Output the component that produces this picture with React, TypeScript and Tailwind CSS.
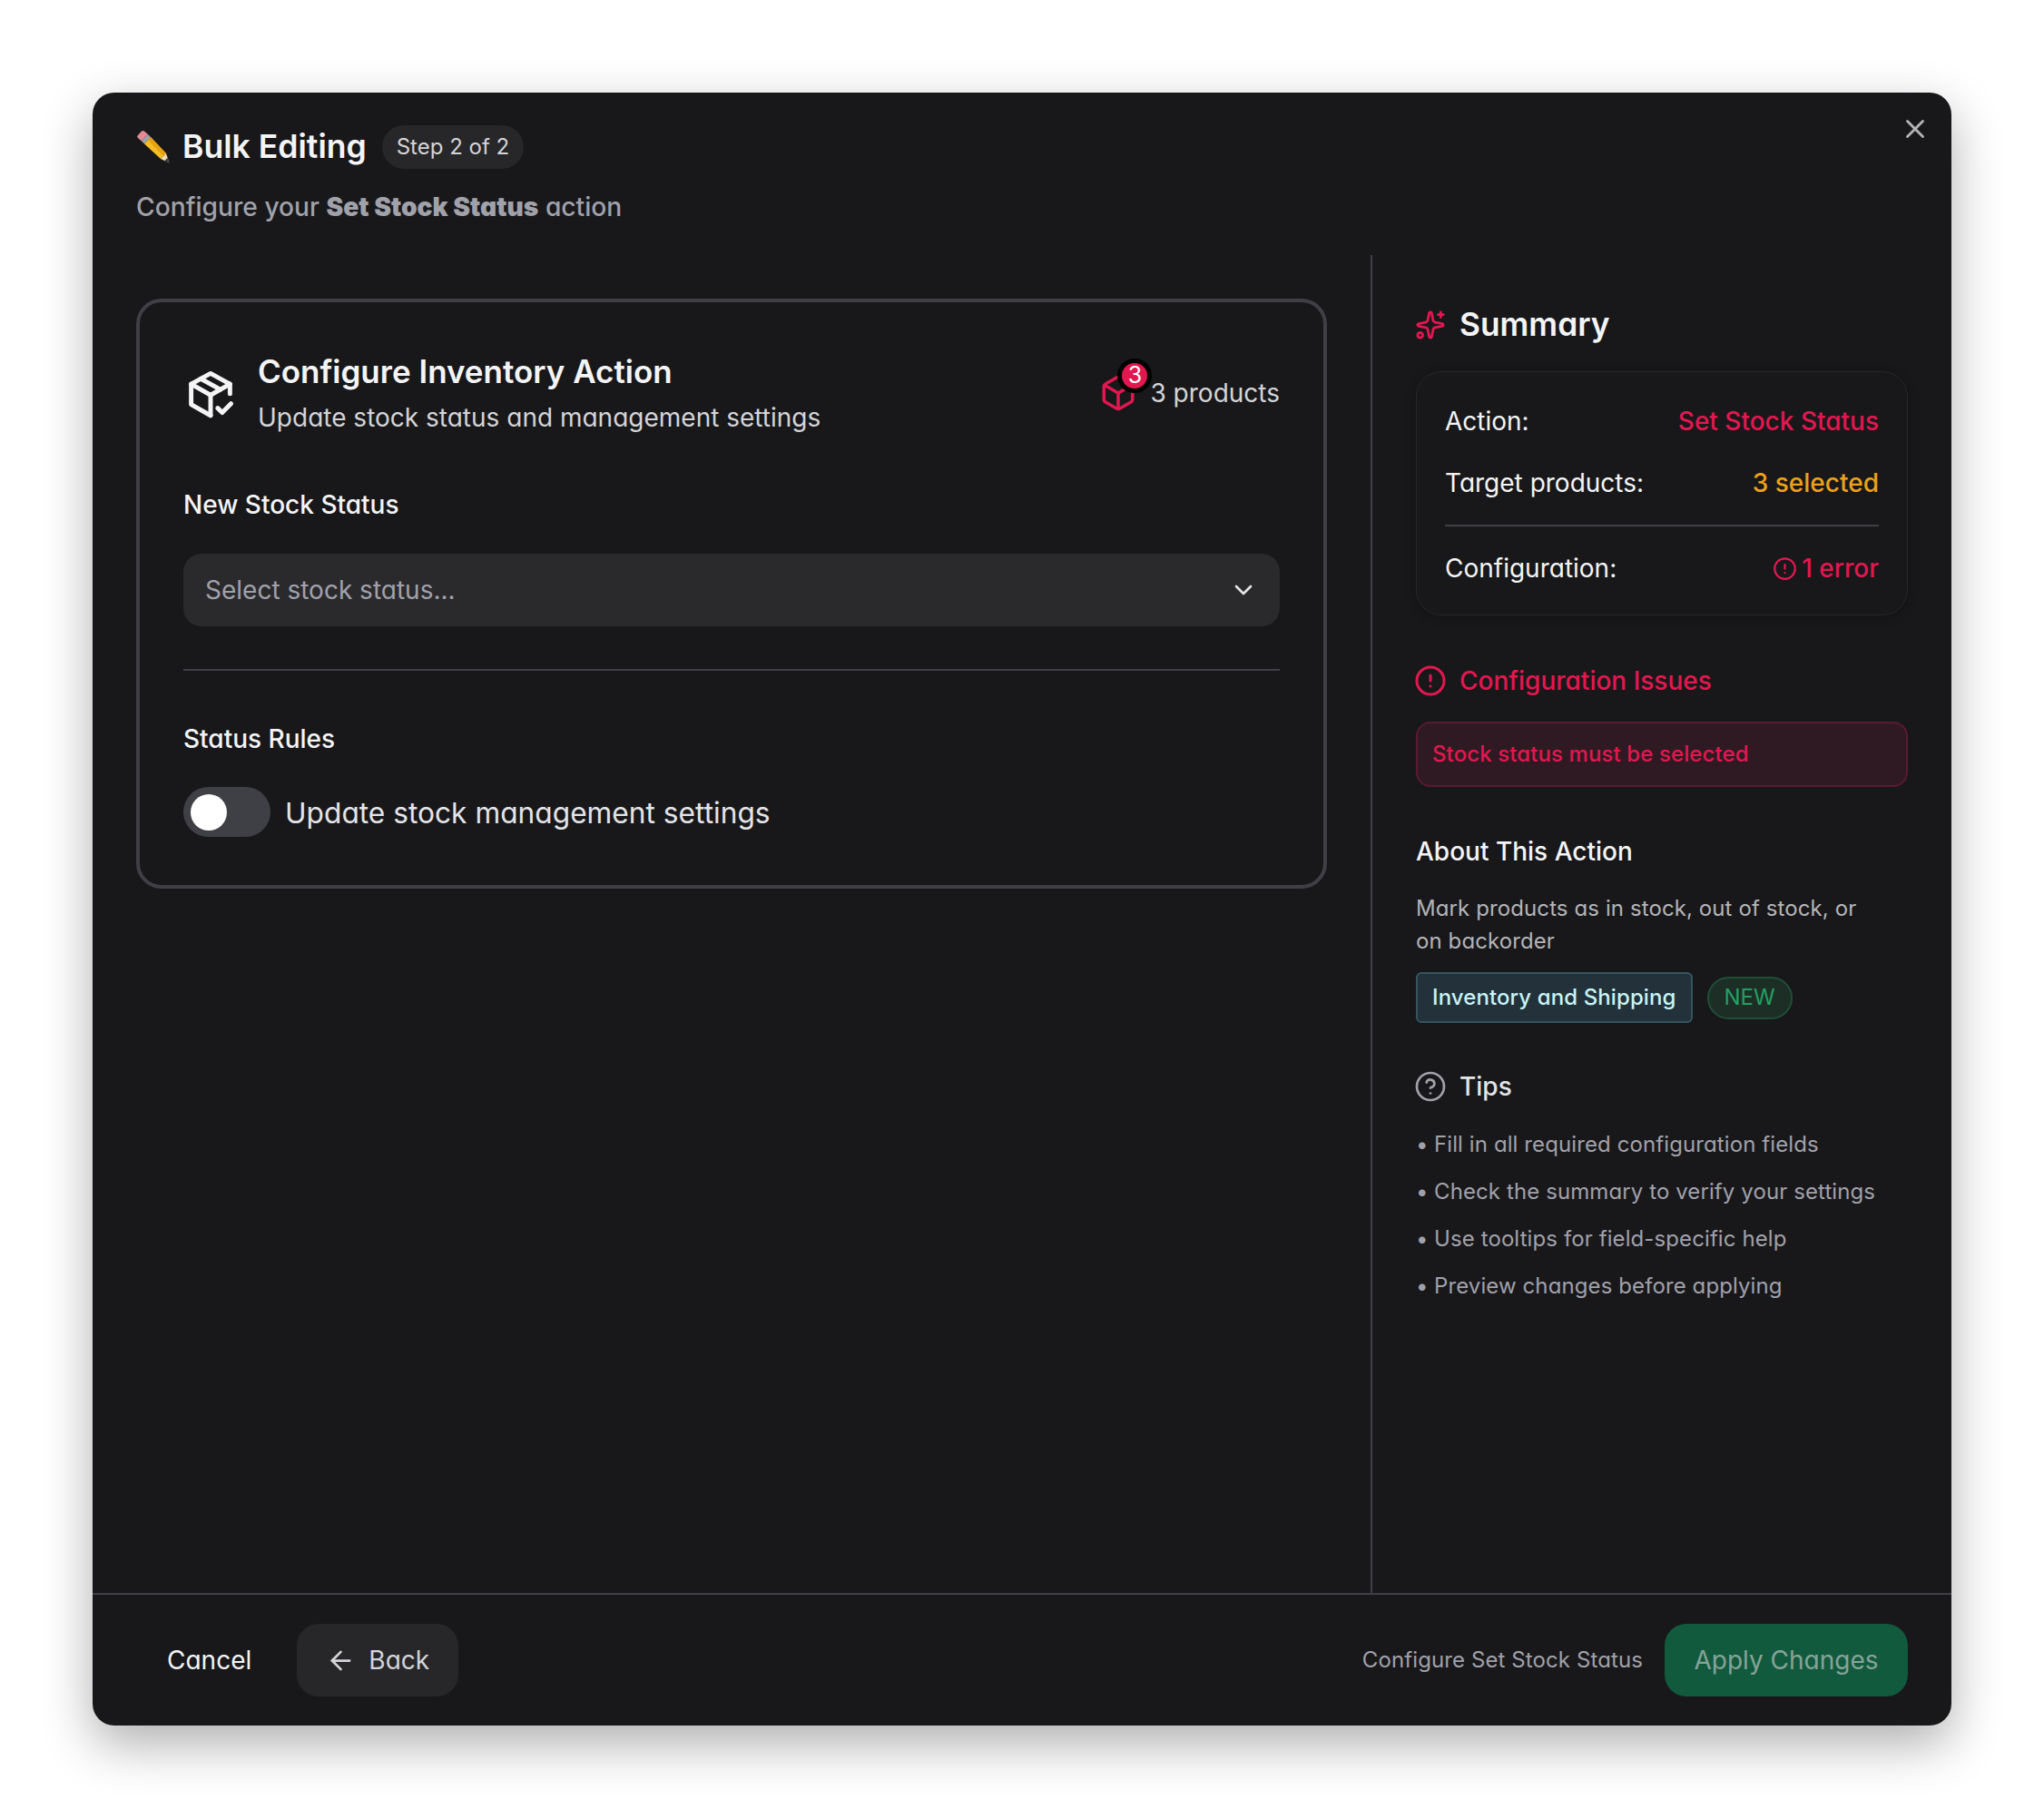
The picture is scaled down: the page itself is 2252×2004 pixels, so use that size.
import React from "react";
import { X, ChevronDown, Sparkles, CircleAlert, CircleHelp, ArrowLeft, Box } from "lucide-react";

const Pencil = () => (
  <svg width="38" height="38" viewBox="0 0 38 38" className="shrink-0">
    <path d="M1.5 6.5 L6 1.5 C7 0.8 8 0.8 9 1.5 L13 5 L6 12.5 L2 9 C1 8 1 7.2 1.5 6.5 Z" fill="#e58a94" />
    <path d="M6 12.5 L13 5 L16 8 L9 15.5 Z" fill="#9aa5ad" />
    <path d="M9 15.5 L16 8 L33 26 L27 32 Z" fill="#f7bd22" />
    <path d="M13 11.5 L16 8 L33 26 L30 29 Z" fill="#e8a016" />
    <path d="M27 32 L33 26 L36.5 36.5 Z" fill="#f3dcb0" />
    <path d="M34.5 31 L36.5 36.5 L31 34.5 Z" fill="#3a3a3a" />
  </svg>
);

const PackageIcon = () => (
  <svg width="54" height="58" viewBox="0 0 24 25" fill="none" stroke="#f4f4f5" strokeWidth="2.2" strokeLinecap="round" strokeLinejoin="round" className="shrink-0">
    <path d="M21.5 12V7.2L12 2 2.5 7.2v10L12 22.6" />
    <path d="M2.5 7.2 12 12.6l9.5-5.4" />
    <path d="M12 12.6v10" />
    <path d="M7.2 4.6 16.8 9.9" />
    <path d="m15.5 19 2.2 2.2 4.3-4.4" />
  </svg>
);

const tips = [
  "Fill in all required configuration fields",
  "Check the summary to verify your settings",
  "Use tooltips for field-specific help",
  "Preview changes before applying",
];

export default function App() {
  return (
    <div className="w-[2252px] h-[2004px] bg-white p-[102px] font-['Inter',sans-serif] [font-feature-settings:'cv11'] antialiased">
      <div className="relative w-[2048px] h-[1799px] flex flex-col rounded-[24px] bg-[#18181b] shadow-[0_20px_55px_rgba(0,0,0,0.32)]">
        <button className="absolute right-[23px] top-[23px] text-[#b4b4b8]">
          <X size={34} strokeWidth={2} />
        </button>

        {/* header */}
        <div className="h-[179px] shrink-0 pl-[48px] pt-[36px]">
          <div className="flex items-center h-[48px]">
            <Pencil />
            <h1 className="ml-[13px] text-[35.6px] leading-[48px] font-semibold text-[#f4f4f5]">Bulk Editing</h1>
            <span className="ml-[17px] h-[48px] rounded-full bg-[#27272a] px-[16px] flex items-center text-[24px] text-[#d4d4d8]">Step 2 of 2</span>
          </div>
          <p className="mt-[23px] text-[28.2px] leading-[38px] text-[#a1a1aa] font-medium">
            Configure your <strong className="font-black">Set Stock Status</strong> action
          </p>
        </div>

        {/* body */}
        <div className="flex flex-1 min-h-0">
          <div className="w-[1408px] shrink-0 p-[48px]">
            <div className="h-[650px] rounded-[28px] border-[4px] border-[#3f3f46] px-[48px] pt-[53px]">
              <div className="flex items-start">
                <div className="mt-[20px] ml-[3px] mr-[25px]"><PackageIcon /></div>
                <div className="flex-1">
                  <h2 className="text-[35px] leading-[46px] font-semibold text-[#f4f4f5]">Configure Inventory Action</h2>
                  <p className="mt-[8px] text-[28px] leading-[40px] text-[#d4d4d8]">Update stock status and management settings</p>
                </div>
                <div className="relative mt-[27px] flex items-center h-[40px]">
                  <Box size={42} strokeWidth={2} className="text-[#e3174f] ml-[1px] mr-[14px] mt-[-1px]" />
                  <span className="absolute left-[21px] top-[-18px] w-[38px] h-[38px] rounded-full bg-[#e3174f] border-[5px] border-black flex items-center justify-center text-[25px] text-white">3</span>
                  <span className="text-[28px] leading-[40px] text-[#d4d4d8]">3 products</span>
                </div>
              </div>

              <div className="mt-[56px] text-[28px] leading-[40px] font-medium text-[#f4f4f5]">New Stock Status</div>
              <div className="mt-[34px] h-[80px] rounded-[20px] bg-[#2a2a2d] flex items-center justify-between pl-[24px] pr-[24px]">
                <span className="text-[28px] text-[#a1a1aa]">Select stock status...</span>
                <ChevronDown size={32} strokeWidth={2} className="text-[#e4e4e7]" />
              </div>
              <div className="mt-[47px] h-[2px] bg-[#3f3f46]" />
              <div className="mt-[55px] text-[28px] leading-[40px] font-medium text-[#f4f4f5]">Status Rules</div>
              <div className="mt-[33px] flex items-center">
                <div className="w-[96px] h-[55px] rounded-full bg-[#3f3f46] flex items-center pl-[8px]">
                  <div className="w-[40px] h-[40px] rounded-full bg-white" />
                </div>
                <span className="ml-[16px] pt-[3px] text-[31.7px] leading-[44px] text-[#e4e4e7]">Update stock management settings</span>
              </div>
            </div>
          </div>

          <div className="flex-1 border-l-[2px] border-[#3f3f46] px-[48px] pt-[55px]">
            <div className="flex items-center h-[44px]">
              <Sparkles size={34} strokeWidth={2} className="text-[#e3174f] shrink-0 ml-[-1px]" />
              <h3 className="ml-[15px] text-[35.3px] leading-[44px] font-semibold text-[#f4f4f5]">Summary</h3>
            </div>
            <div className="mt-[29px] h-[269px] rounded-[28px] border-[1px] border-[#27272a] px-[31px] pt-[34px] shadow-[0_2px_12px_rgba(0,0,0,0.25)]">
              <div className="flex justify-between text-[28px] leading-[40px]">
                <span className="text-[#f4f4f5]">Action:</span>
                <span className="font-medium text-[#e3174f]">Set Stock Status</span>
              </div>
              <div className="mt-[28px] flex justify-between text-[28px] leading-[40px]">
                <span className="text-[#f4f4f5]">Target products:</span>
                <span className="font-medium text-[#eca11a]">3 selected</span>
              </div>
              <div className="mt-[26px] h-[2px] bg-[#3f3f46]" />
              <div className="mt-[26px] flex justify-between text-[28px] leading-[40px]">
                <span className="text-[#f4f4f5]">Configuration:</span>
                <span className="flex items-center gap-[5px] font-medium text-[#e3174f]"><CircleAlert size={27} strokeWidth={2} />1 error</span>
              </div>
            </div>

            <div className="mt-[52px] flex items-center h-[40px]">
              <CircleAlert size={36} strokeWidth={2} className="text-[#e3174f] shrink-0 ml-[-2px]" />
              <h4 className="ml-[14px] text-[28px] leading-[40px] font-medium text-[#e3174f]">Configuration Issues</h4>
            </div>
            <div className="mt-[25px] h-[72px] rounded-[16px] border-[2px] border-[#5a1a30] bg-[#2f1a23] flex items-center pl-[16px] text-[24px] tracking-[0.1px] font-medium text-[#e3174f]">Stock status must be selected</div>

            <h4 className="mt-[51px] text-[28px] leading-[40px] font-medium text-[#f4f4f5]">About This Action</h4>
            <p className="mt-[25px] pr-[40px] text-[24px] tracking-[0.1px] leading-[36px] text-[#b4b4b8]">Mark products as in stock, out of stock, or on backorder</p>
            <div className="mt-[16px] flex items-center">
              <span className="h-[56px] rounded-[6px] border-[2px] border-[#35545f] bg-[#23323a] px-[16px] flex items-center text-[24px] tracking-[0.1px] font-medium text-[#c8f3f6]">Inventory and Shipping</span>
              <span className="ml-[16px] h-[47px] rounded-full border-[2px] border-[#1f4f37] bg-[#1c2e26] px-[17px] flex items-center text-[24px] text-[#22a060]">NEW</span>
            </div>

            <div className="mt-[50px] flex items-center h-[40px]">
              <CircleHelp size={36} strokeWidth={1.8} className="text-[#a1a1aa] shrink-0 ml-[-2px]" />
              <h4 className="ml-[14px] text-[28px] leading-[40px] font-medium text-[#e4e4e7]">Tips</h4>
            </div>
            <ul className="mt-[26px] flex flex-col gap-[16px]">
              {tips.map((t) => (
                <li key={t} className="flex items-center text-[24px] tracking-[0.1px] leading-[36px] text-[#a1a1aa]">
                  <span className="w-[20px] shrink-0">•</span>
                  <span>{t}</span>
                </li>
              ))}
            </ul>
          </div>
        </div>

        {/* footer */}
        <div className="h-[146px] shrink-0 border-t-[2px] border-[#3f3f46] flex items-center justify-between pl-[82px] pr-[48px]">
          <div className="flex items-center">
            <button className="text-[28px] text-[#f4f4f5]">Cancel</button>
            <button className="ml-[50px] w-[178px] h-[80px] rounded-[24px] bg-[#27272a] flex items-center justify-center gap-[14px] text-[28px] text-[#d4d4d8]">
              <ArrowLeft size={33} strokeWidth={2} />
              Back
            </button>
          </div>
          <div className="flex items-center">
            <span className="text-[24px] tracking-[0.1px] text-[#a1a1aa]">Configure Set Stock Status</span>
            <button className="ml-[24px] w-[268px] h-[80px] rounded-[24px] bg-[#125a3e] flex items-center justify-center text-[28px] text-[#86a398]">Apply Changes</button>
          </div>
        </div>
      </div>
    </div>
  );
}
